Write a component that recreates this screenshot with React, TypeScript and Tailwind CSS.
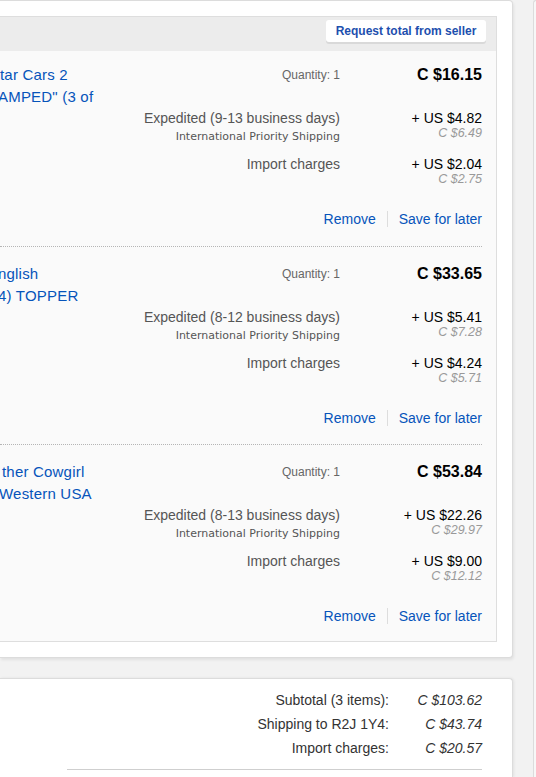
const items = [
  {
    title: [
      { text: 'tar Cars 2', shift: 0 },
      { text: 'AMPED" (3 of', shift: -2 },
    ],
    price: 'C $16.15',
    shipping: 'Expedited (9-13 business days)',
    shipUs: '+ US $4.82',
    shipCa: 'C $6.49',
    importUs: '+ US $2.04',
    importCa: 'C $2.75',
  },
  {
    title: [
      { text: 'nglish', shift: -2 },
      { text: '4) TOPPER', shift: -2 },
    ],
    price: 'C $33.65',
    shipping: 'Expedited (8-12 business days)',
    shipUs: '+ US $5.41',
    shipCa: 'C $7.28',
    importUs: '+ US $4.24',
    importCa: 'C $5.71',
  },
  {
    title: [
      { text: 'ther Cowgirl', shift: 2 },
      { text: 'Western USA', shift: -1 },
    ],
    price: 'C $53.84',
    shipping: 'Expedited (8-13 business days)',
    shipUs: '+ US $22.26',
    shipCa: 'C $29.97',
    importUs: '+ US $9.00',
    importCa: 'C $12.12',
  },
];

type Item = (typeof items)[number];

function CartItem({ item, index }: { item: Item; index: number }) {
  const first = index === 0;
  const last = index === items.length - 1;
  return (
    <div
      className={
        (first ? 'pt-[13px] ' : 'pt-[16px] border-t border-dotted border-[#b5b5b5] ') +
        (first ? 'pb-[17px]' : last ? 'pb-[15px]' : 'pb-[16px]')
      }
    >
      {/* title + quantity + price */}
      <div className="flex h-[44px]">
        <div className="flex-1 min-w-0 text-[15px] leading-[22px] text-[#0654ba] tracking-[0.2px]">
          {item.title.map((line) => (
            <div
              key={line.text}
              className="whitespace-nowrap"
              style={{ marginLeft: line.shift }}
            >
              {line.text}
            </div>
          ))}
        </div>
        <div className="w-[200px] mr-[32px] text-right text-[12px] leading-[22px] text-[#666]">
          Quantity: 1
        </div>
        <div className="w-[110px] text-right text-[16px] leading-[22px] font-bold text-black">
          {item.price}
        </div>
      </div>

      {/* shipping */}
      <div className="flex h-[46px]">
        <div className="flex-1" />
        <div className="w-[200px] mr-[32px] text-right">
          <div className="text-[14px] leading-[20px] text-[#555] whitespace-nowrap">
            {item.shipping}
          </div>
          <div className="mt-[2px] text-[11px] leading-[14px] text-[#555] whitespace-nowrap font-['DejaVu_Sans',Verdana,sans-serif]">
            International Priority Shipping
          </div>
        </div>
        <div className="w-[110px] text-right">
          <div className="pt-[2px] text-[14px] leading-[16px] text-black">
            {item.shipUs}
          </div>
          <div className="text-[12.5px] leading-[14px] italic text-[#999]">
            {item.shipCa}
          </div>
        </div>
      </div>

      {/* import charges */}
      <div className="flex h-[45px]">
        <div className="flex-1" />
        <div className="w-[200px] mr-[32px] text-right text-[14px] leading-[20px] text-[#555]">
          Import charges
        </div>
        <div className="w-[110px] text-right">
          <div className="pt-[2px] text-[14px] leading-[16px] text-black">
            {item.importUs}
          </div>
          <div className="text-[12.5px] leading-[14px] italic text-[#999]">
            {item.importCa}
          </div>
        </div>
      </div>

      {/* actions */}
      <div className="flex justify-end items-center h-[30px] pt-[10px] text-[14px] leading-[20px] text-[#0654ba]">
        <span>Remove</span>
        <span className="mx-[11px] w-px h-[16px] bg-[#ddd]" />
        <span>Save for later</span>
      </div>
    </div>
  );
}

function SummaryRow({ label, value }: { label: string; value: string }) {
  return (
    <div className="flex justify-end text-[14px] leading-[24px] text-[#333]">
      <span>{label}</span>
      <span className="w-[93px] text-right italic">{value}</span>
    </div>
  );
}

export default function App() {
  return (
    <div className="w-[536px] h-[777px] overflow-hidden bg-[#f2f2f2] flex font-['Liberation_Sans',Arial,sans-serif]">
      <div className="w-[513px] shrink-0 flex flex-col">
        {/* seller card */}
        <div className="bg-white border border-l-0 border-[#dcdcdc] rounded-r-[4px] pt-[15px] pr-[15px] pb-[15px] shadow-[1px_2px_3px_rgba(0,0,0,0.07)]">
          <div className="border border-l-0 border-[#dedede] bg-[#fafafa]">
            <div className="h-[34px] bg-[#ececec] flex justify-end items-start pt-[3px] pr-[10px]">
              <button className="w-[160px] h-[22px] bg-white rounded-[3px] shadow-[0_2px_0_#d9d9d9] text-[12px] font-bold text-[#1d4fae] leading-[22px]">
                Request total from seller
              </button>
            </div>
            <div className="pr-[14px]">
              {items.map((item, i) => (
                <CartItem key={item.price} item={item} index={i} />
              ))}
            </div>
          </div>
        </div>

        {/* order summary */}
        <div className="mt-[20px] flex-1 bg-white border border-l-0 border-b-0 border-[#dcdcdc] rounded-tr-[4px] pt-[9px] pr-[30px] shadow-[1px_0_3px_rgba(0,0,0,0.07)]">
          <SummaryRow label="Subtotal (3 items):" value="C $103.62" />
          <SummaryRow label="Shipping to R2J 1Y4:" value="C $43.74" />
          <SummaryRow label="Import charges:" value="C $20.57" />
          <div className="mt-[9px] ml-[67px] border-t border-[#cfcfcf]" />
        </div>
      </div>

      <div className="w-[20px] shrink-0" />
      <div className="flex-1 bg-[#f7f7f7] border-l border-t border-[#dcdcdc] rounded-tl-[4px]" />
    </div>
  );
}
